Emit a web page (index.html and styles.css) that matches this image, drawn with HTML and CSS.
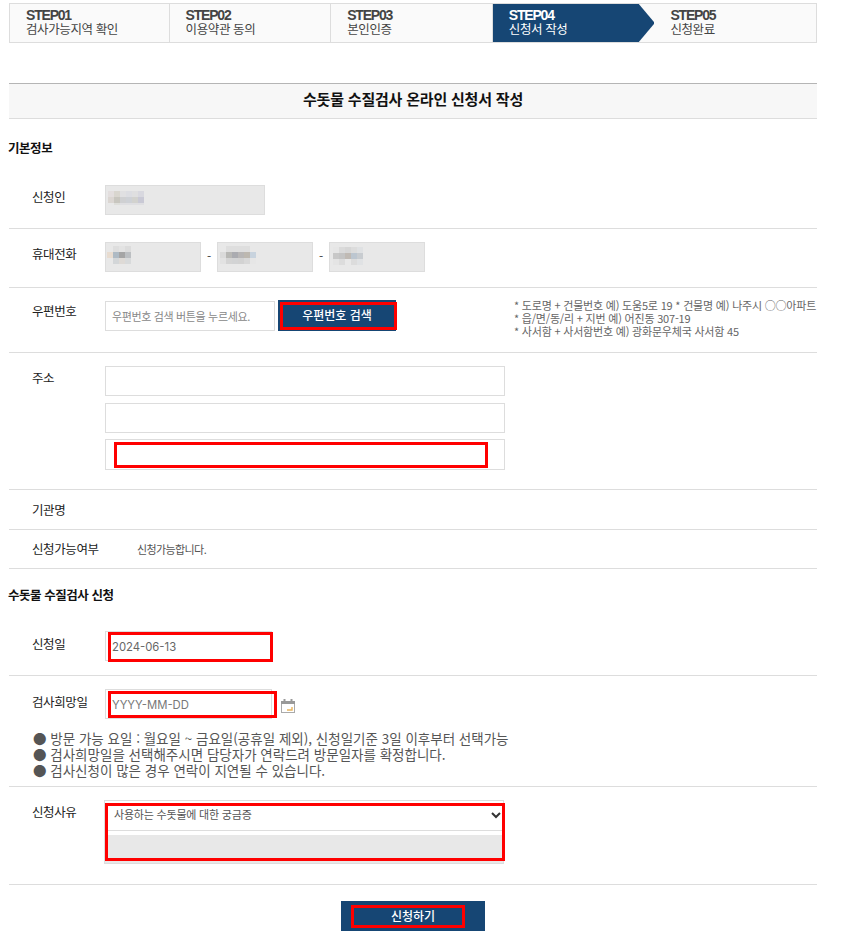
FILE: index.html
```html
<!DOCTYPE html>
<html lang="ko">
<head>
<meta charset="utf-8">
<title>수돗물 수질검사 온라인 신청서 작성</title>
<link rel="stylesheet" href="styles.css">
</head>
<body>
<div class="page">
  <ol class="steps">
    <li class="step"><b>STEP01</b><span>검사가능지역 확인</span></li>
    <li class="step"><b>STEP02</b><span>이용약관 동의</span></li>
    <li class="step"><b>STEP03</b><span>본인인증</span></li>
    <li class="step active"><b>STEP04</b><span>신청서 작성</span></li>
    <li class="step last"><b>STEP05</b><span>신청완료</span></li>
  </ol>

  <h1 class="title">수돗물 수질검사 온라인 신청서 작성</h1>

  <h2 class="section first">기본정보</h2>

  <div class="row r1">
    <div class="label">신청인</div>
    <div class="field w160 disabled">
      <svg class="mosaic" width="36" height="14" viewBox="0 0 36 14">
        <rect x="0" y="0" width="6" height="6" fill="#e3dede"/><rect x="6" y="0" width="6" height="6" fill="#d9d6cf"/><rect x="12" y="0" width="6" height="6" fill="#e0e0e2"/><rect x="18" y="0" width="6" height="6" fill="#dcdde2"/><rect x="24" y="0" width="6" height="6" fill="#dfdfe0"/><rect x="30" y="0" width="6" height="6" fill="#d8d8df"/>
        <rect x="0" y="6" width="6" height="6" fill="#dbd6d2"/><rect x="6" y="6" width="6" height="6" fill="#c8c6bf"/><rect x="12" y="6" width="6" height="6" fill="#cfd0d2"/><rect x="18" y="6" width="6" height="6" fill="#ced1d6"/><rect x="24" y="6" width="6" height="6" fill="#d2d2ce"/><rect x="30" y="6" width="6" height="6" fill="#c9c9d5"/>
        <rect x="6" y="12" width="6" height="2" fill="#dededa"/><rect x="12" y="12" width="24" height="2" fill="#dfdfe2"/>
      </svg>
    </div>
  </div>

  <div class="row r2">
    <div class="label">휴대전화</div>
    <div class="phone">
      <div class="field w96 disabled">
        <svg class="mosaic m1" width="24" height="18" viewBox="0 0 24 18">
          <rect x="6" y="0" width="6" height="6" fill="#dedede"/><rect x="12" y="0" width="6" height="6" fill="#e3e3e3"/><rect x="18" y="0" width="6" height="6" fill="#dcdcdc"/>
          <rect x="0" y="6" width="6" height="6" fill="#e8dcd0"/><rect x="6" y="6" width="6" height="6" fill="#aebac4"/><rect x="12" y="6" width="6" height="6" fill="#a5a5a5"/><rect x="18" y="6" width="6" height="6" fill="#bcbfc2"/>
          <rect x="6" y="12" width="6" height="6" fill="#d3d6d8"/><rect x="12" y="12" width="6" height="6" fill="#dedad6"/><rect x="18" y="12" width="6" height="6" fill="#d8dadb"/>
        </svg>
      </div>
      <span class="dash">-</span>
      <div class="field w96 disabled">
        <svg class="mosaic m2" width="36" height="18" viewBox="0 0 36 18">
          <rect x="6" y="0" width="24" height="6" fill="#dedede"/>
          <rect x="0" y="6" width="6" height="6" fill="#dadada"/><rect x="6" y="6" width="6" height="6" fill="#b8b8b5"/><rect x="12" y="6" width="6" height="6" fill="#aaabb0"/><rect x="18" y="6" width="6" height="6" fill="#b8b6b6"/><rect x="24" y="6" width="6" height="6" fill="#bdb8b0"/><rect x="30" y="6" width="6" height="6" fill="#c8d3de"/>
          <rect x="0" y="12" width="6" height="6" fill="#e2e2e2"/><rect x="6" y="12" width="6" height="6" fill="#d4d4d4"/><rect x="12" y="12" width="6" height="6" fill="#d2d3d4"/><rect x="18" y="12" width="6" height="6" fill="#d2d2d2"/><rect x="24" y="12" width="6" height="6" fill="#d8d8d8"/><rect x="30" y="12" width="6" height="6" fill="#e6e6e6"/>
        </svg>
      </div>
      <span class="dash">-</span>
      <div class="field w96 disabled">
        <svg class="mosaic m3" width="30" height="18" viewBox="0 0 30 18">
          <rect x="0" y="0" width="6" height="6" fill="#e6e6e6"/><rect x="6" y="0" width="6" height="6" fill="#dadada"/><rect x="12" y="0" width="6" height="6" fill="#d6d6d6"/><rect x="18" y="0" width="6" height="6" fill="#dcdcdc"/><rect x="24" y="0" width="6" height="6" fill="#dfe1e3"/>
          <rect x="0" y="6" width="6" height="6" fill="#c8c8c8"/><rect x="6" y="6" width="6" height="6" fill="#c4c4c4"/><rect x="12" y="6" width="6" height="6" fill="#c0bab4"/><rect x="18" y="6" width="6" height="6" fill="#bcc6d0"/><rect x="24" y="6" width="6" height="6" fill="#c8ccd0"/>
          <rect x="0" y="12" width="6" height="6" fill="#e4e4e4"/><rect x="6" y="12" width="6" height="6" fill="#dcdcdc"/><rect x="12" y="12" width="6" height="6" fill="#e8e8e8"/><rect x="18" y="12" width="6" height="6" fill="#dcdcdc"/><rect x="24" y="12" width="6" height="6" fill="#e0e2e4"/>
        </svg>
      </div>
    </div>
  </div>

  <div class="row r3">
    <div class="label">우편번호</div>
    <div class="zip">
      <input class="input w170 zipinput" type="text" placeholder="우편번호 검색 버튼을 누르세요.">
      <button class="btn zipbtn" type="button">우편번호 검색<i class="mark"></i></button>
    </div>
    <ul class="hints">
      <li>* 도로명 + 건물번호 예) 도움5로 19 * 건물명 예) 나주시 ○○아파트</li>
      <li>* 읍/면/동/리 + 지번 예) 어진동 307-19</li>
      <li>* 사서함 + 사서함번호 예) 광화문우체국 사서함 45</li>
    </ul>
  </div>

  <div class="row r4">
    <div class="label">주소</div>
    <div class="stack">
      <input class="input w400" type="text">
      <input class="input w400" type="text">
      <div class="markwrap">
        <input class="input w400 tall" type="text">
        <i class="mark addr"></i>
      </div>
    </div>
  </div>

  <div class="row r5">
    <div class="label">기관명</div>
  </div>

  <div class="row r6">
    <div class="label">신청가능여부</div>
    <div class="status">신청가능합니다.</div>
  </div>

  <h2 class="section second">수돗물 수질검사 신청</h2>

  <div class="row r7">
    <div class="label">신청일</div>
    <div class="markwrap">
      <input class="input w166 date" type="text" value="2024-06-13">
      <i class="mark d1"></i>
    </div>
  </div>

  <div class="row r8">
    <div class="label">검사희망일</div>
    <div class="col">
      <div class="pick">
        <div class="markwrap">
          <input class="input w166 date" type="text" placeholder="YYYY-MM-DD">
          <i class="mark d2"></i>
        </div>
        <svg class="cal" width="14" height="14" viewBox="0 0 14 14">
          <rect x="0.5" y="2.5" width="13" height="11" fill="#fff" stroke="#aaa"/>
          <rect x="0" y="2" width="14" height="3" fill="#999"/>
          <rect x="2.5" y="0" width="2" height="3" fill="#999"/>
          <rect x="9.5" y="0" width="2" height="3" fill="#999"/>
          <path d="M6 11h5V8" fill="none" stroke="#e8b45c" stroke-width="1.4"/>
        </svg>
      </div>
    </div>
  </div>
  <ul class="notes">
    <li>● 방문 가능 요일 : 월요일 ~ 금요일(공휴일 제외), 신청일기준 3일 이후부터 선택가능</li>
    <li>● 검사희망일을 선택해주시면 담당자가 연락드려 방문일자를 확정합니다.</li>
    <li>● 검사신청이 많은 경우 연락이 지연될 수 있습니다.</li>
  </ul>

  <div class="row r9">
    <div class="label">신청사유</div>
    <div class="reason markwrap">
      <div class="select">
        <span>사용하는 수돗물에 대한 궁금증</span>
        <svg width="10" height="7" viewBox="0 0 10 7"><path d="M1 1l4 4 4-4" fill="none" stroke="#333" stroke-width="2"/></svg>
      </div>
      <div class="graybox"></div>
      <i class="mark rs"></i>
    </div>
  </div>

  <div class="actions">
    <button class="btn submit" type="button">신청하기<i class="mark sb"></i></button>
  </div>
</div>
</body>
</html>
```
FILE: styles.css
```css
* { box-sizing: border-box; }
html, body { margin: 0; padding: 0; background: #fff; }
body {
  font-family: "Noto Sans CJK KR", "Noto Sans", sans-serif;
  color: #333;
  height: 932px;
  overflow: hidden;
}
.page { width: 808px; margin: 3px 0 0 9px; }

.steps {
  display: flex;
  list-style: none;
  margin: 0;
  padding: 0;
  height: 40px;
  background: #fafafa;
  border: 1px solid #ddd;
}
.step {
  width: 162px;
  padding: 4px 0 0 16px;
  border-right: 1px solid #ddd;
  line-height: 14px;
  color: #444;
}
.step:first-child { width: 160px; }
.step b {
  display: block;
  font-family: "Liberation Sans", sans-serif;
  font-size: 14px;
  font-weight: 700;
  letter-spacing: -1.2px;
}
.step span { display: block; font-size: 12.5px; letter-spacing: -0.4px; }
.step.active {
  background: #164674;
  color: #fff;
  border-right: 0;
  clip-path: polygon(0 0, 146px 0, 162px 50%, 146px 100%, 0 100%);
}
.step.last { border-right: 0; }

.title {
  margin: 40px 0 0;
  height: 36px;
  background: #f7f7f7;
  border-top: 1px solid #b5b5b5;
  border-bottom: 1px solid #ddd;
  font-size: 15px;
  line-height: 30px;
  font-weight: 700;
  color: #111;
  text-align: center;
  letter-spacing: -0.2px;
}
.section {
  margin: 0 0 0 -1px;
  font-size: 12.5px;
  font-weight: 700;
  color: #111;
  letter-spacing: -0.45px;
}
.section.first { height: 54px; padding-top: 20px; line-height: 18px; }
.section.second { height: 62px; padding-top: 17px; line-height: 18px; }

.row {
  display: flex;
  border-bottom: 1px solid #ddd;
  position: relative;
}
.label {
  width: 96px;
  padding-left: 23px;
  font-size: 12.5px;
  line-height: 18px;
  color: #222;
  letter-spacing: -0.4px;
  flex: none;
}
.r1 { padding: 12px 0 13px; }
.r1 .label { padding-top: 3px; }
.r2 { padding: 13px 0 15px; }
.r2 .label { padding-top: 3px; }
.r3 { height: 65px; padding-top: 13px; }
.r3 .label { padding-top: 1px; }
.r4 { padding: 13px 0 19px; }
.r4 .label { padding-top: 3px; }
.r5 { height: 40px; align-items: center; }
.r6 { height: 39px; align-items: center; }
.r7 { padding: 0 0 14px; }
.r7 .label { padding-top: 4px; }
.r8 { border-bottom: 0; padding-top: 13px; }
.r8 .label { padding-top: 4px; }
.r9 { padding: 13px 0 20px; }
.r9 .label { padding-top: 3px; }

.field { height: 30px; border: 1px solid #ddd; flex: none; }
.disabled { background: #e8e8e8; }
.w160 { width: 160px; }
.w96 { width: 96px; }
.mosaic { display: block; margin: 5px 0 0 2px; }
.m1 { margin: 3px 0 0 1px; }
.m2 { margin: 3px 0 0 2px; }
.m3 { margin: 4px 0 0 3px; }
.phone { display: flex; align-items: center; }
.dash { width: 16px; margin-top: -4px; text-align: center; font-size: 12px; color: #444; }

.input {
  display: block;
  height: 30px;
  border: 1px solid #ddd;
  background: #fff;
  padding: 0 6px;
  font-family: inherit;
  font-size: 11.5px;
  color: #444;
  outline: 0;
  letter-spacing: -0.2px;
}
.input::placeholder { color: #777; opacity: 1; }
.zipinput { font-size: 11px; letter-spacing: -0.35px; }
.zipinput::placeholder { color: #888; }
.w170 { width: 170px; }
.w400 { width: 400px; }
.w166 { width: 167px; }
.tall { height: 31px; }
.date { padding: 2px 6px 0; font-size: 11.3px; letter-spacing: 0; font-family: Inter, "Noto Sans CJK KR", sans-serif; color: #666; }
.zip { display: flex; align-items: flex-start; flex: none; }
.btn {
  background: #164674;
  color: #fff;
  border: 0;
  padding: 0;
  font-family: inherit;
  font-weight: 500;
  position: relative;
}
.zipbtn { width: 118px; height: 31px; margin: -1px 0 0 3px; padding-bottom: 3px; font-size: 12px; }
.hints {
  list-style: none;
  margin: -2px 0 0 auto;
  padding: 0;
  width: 303px;
  font-size: 11px;
  line-height: 13px;
  color: #666;
  white-space: nowrap;
  letter-spacing: -0.2px;
}
.stack { display: flex; flex-direction: column; gap: 7px; }
.stack .markwrap { margin-top: -1px; }
.status { margin-left: 32px; margin-top: -1px; font-size: 11px; color: #555; letter-spacing: -0.6px; }
.col { display: flex; flex-direction: column; }
.pick { display: flex; align-items: flex-start; }
.cal { margin: 10px 0 0 9px; flex: none; }
.notes {
  list-style: none;
  margin: 0;
  padding: 11px 0 8px 24px;
  border-bottom: 1px solid #ddd;
  font-size: 13.5px;
  line-height: 16px;
  color: #555;
  letter-spacing: 0;
}
.reason { width: 400px; margin-left: -1px; border: 1px solid #ddd; }
.select {
  height: 30px;
  display: flex;
  align-items: center;
  justify-content: space-between;
  padding: 0 2px 0 9px;
  font-size: 11px;
  letter-spacing: -0.2px;
  color: #555;
  background: #fff;
  border-bottom: 1px solid #ddd;
}
.select span { margin-top: -3px; }
.graybox { height: 28px; margin-top: 4px; background: #e8e8e8; }
.actions { display: flex; justify-content: center; padding-top: 16px; }
.submit { width: 144px; height: 30px; padding-bottom: 2px; font-size: 12px; }

.markwrap { position: relative; }
.mark { position: absolute; border: 3px solid #f00; pointer-events: none; }
.zipbtn .mark { inset: 2px -1px 1px 2px; }
.addr { left: 9px; top: 3px; width: 374px; height: 26px; }
.d1 { left: 3px; top: 1px; width: 165px; height: 30px; }
.d2 { left: 3px; top: 2px; width: 169px; height: 27px; }
.rs { left: 0; top: 2px; width: 400px; height: 58px; }
.sb { left: 10px; top: 4px; width: 114px; height: 23px; }
```
